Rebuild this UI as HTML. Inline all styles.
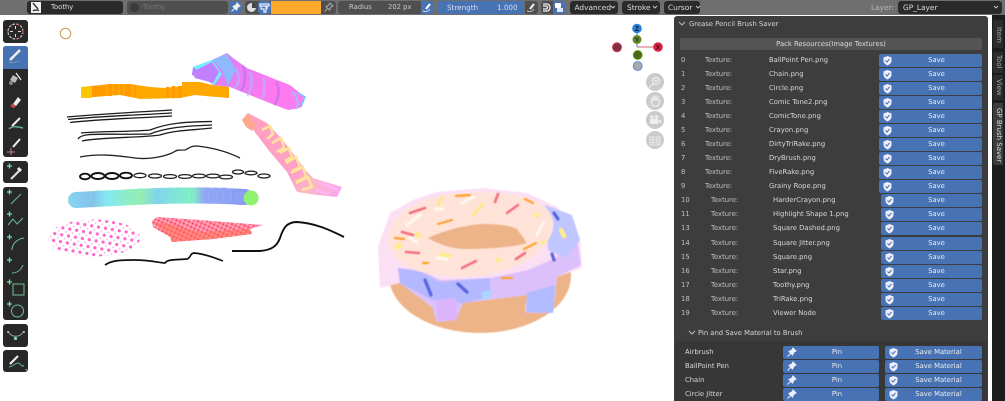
<!DOCTYPE html>
<html><head><meta charset="utf-8"><style>
*{box-sizing:border-box}
html,body{margin:0;padding:0;width:1005px;height:401px;overflow:hidden;background:#fff;font-family:"DejaVu Sans","Liberation Sans",sans-serif;text-rendering:geometricPrecision}
div{position:absolute}
#ui{left:0;top:0;width:1005px;height:401px;filter:blur(.35px)}
.t{font-size:6.8px;line-height:13px;height:13px;white-space:nowrap;color:#dadada}
.d{color:#c2c2c2}
.b{background:#4772b3;border-radius:2px;height:13px;color:#eee;font-size:6.8px;line-height:13px;text-align:center;text-indent:12px}
.b svg{position:absolute;left:3px;top:1px}
.s{left:879px;width:103px}.s2{left:881px;width:101px;text-indent:10px}.p{left:783px;width:96px}.m{left:885px;width:97px;text-indent:10px}
.f{height:13px;border-radius:3px;top:1px;font-size:7.4px;line-height:13px;color:#ddd;white-space:nowrap}
.k{background:#2a2a2a}.g{background:#4f4f4f}
.tb{background:#282828;left:3px;width:25px;border-radius:3px}
.tab{left:993px;width:10px;background:#2c2c2c;border-radius:2px 0 0 2px}
.tab span{position:absolute;left:1px;top:3px;writing-mode:vertical-rl;font-size:7px;line-height:9px;color:#a8a8a8;white-space:nowrap}
</style></head><body>
<svg width="0" height="0" style="position:absolute"><defs>
<symbol id="sh" viewBox="0 0 11 11"><path d="M5.500 1 9.500 2.500V6C9.500 8 7.500 9.500 5.500 10.500 3.500 9.500 1.500 8 1.500 6V2.500Z" fill="#eef"/><path d="M3.500 5.500 5 7 7.500 4" stroke="#4772b3" fill="none"/></symbol>
<symbol id="pn" viewBox="0 0 12 11"><path d="M7 1 10 4 8 5 6.500 8 3 4.500 6 3ZM4.500 6.500 1.500 9.500" fill="#eef" stroke="#eef"/></symbol>
</defs></svg>
<div id="ui">
<svg width="1005" height="401" style="position:absolute;left:0;top:0">
<defs>
<pattern id="dots" width="7" height="7" patternUnits="userSpaceOnUse" patternTransform="rotate(10)"><rect width="7" height="7" fill="#fff"/><circle cx="3.500" cy="3.500" r="1.600" fill="#ff66cc"/><circle cx="0" cy="0" r=".9" fill="#ffb0e8"/><circle cx="7" cy="0" r=".9" fill="#ffb0e8"/><circle cx="0" cy="7" r=".9" fill="#ffb0e8"/><circle cx="7" cy="7" r=".9" fill="#ffb0e8"/></pattern>
<pattern id="red" width="4" height="4" patternUnits="userSpaceOnUse" patternTransform="rotate(25)"><rect width="4" height="4" fill="#ff8a9c"/><circle cx="1" cy="1" r=".9" fill="#ff3078"/><circle cx="3" cy="3" r=".7" fill="#ffd0d4"/></pattern>
<linearGradient id="ball" x1="68" x2="258" y1="0" y2="0" gradientUnits="userSpaceOnUse"><stop offset="0" stop-color="#86d6ee"/><stop offset=".13" stop-color="#84c0ee"/><stop offset=".2" stop-color="#84e8f4"/><stop offset=".38" stop-color="#96eeb0"/><stop offset=".47" stop-color="#80d4ee"/><stop offset=".66" stop-color="#80f0c4"/><stop offset=".72" stop-color="#8ea4f4"/><stop offset="1" stop-color="#8c9cf6"/></linearGradient>
<linearGradient id="pur" x1="195" y1="65" x2="305" y2="105" gradientUnits="userSpaceOnUse"><stop offset="0" stop-color="#b080ff"/><stop offset=".25" stop-color="#e080f8"/><stop offset=".7" stop-color="#ff78ee"/><stop offset="1" stop-color="#f880f0"/></linearGradient>
<linearGradient id="ribbon" x1="245" y1="115" x2="340" y2="195" gradientUnits="userSpaceOnUse"><stop offset="0" stop-color="#ffa0c0"/><stop offset=".6" stop-color="#ffa0c8"/><stop offset=".78" stop-color="#fcb8c8"/><stop offset="1" stop-color="#f8a4f0"/></linearGradient>
</defs>
<rect width="1005" height="401" fill="#fff"/>
<circle cx="65.500" cy="33.500" r="5.200" fill="none" stroke="#c8a060" stroke-width="1.100"/>
<g style="filter:blur(.3px)">
<path d="M81 87 92 86 110 84 130 84 150 87 165 88 182 86 182 82 200 82 212 85 229 87 229 98 205 96 195 95 180 98 140 99 120 95 105 96 81 98Z" fill="#ffa800"/>
<path d="M81 87H92V98H81Z" fill="#ffc400"/><path d="M92 86 106 85V96L92 97ZM108 84h4v12h-4zM114 84h4v11h-4zM120 84h3v11h-3zM125 84h6v12h-6zM134 85h2v12h-2zM166 87h3v11h-3zM172 86h3v12h-3zM178 86h4v12h-4z" fill="#ff9a00"/>
<path d="M192 75 193 67 212 60 227 53 233 58 247 68 277 80 290 85 305 97 300 108 288 110 267 102 230 87 213 85 207 80Z" fill="url(#pur)"/>
<path d="M193 67 212 60 222 74 214 85 207 80 199 72Z" fill="#70f0ff"/>
<path d="M212 60 227 54 236 70 228 86 222 70Z" fill="#90b8fc"/>
<path d="M192 72 212 62 219 72 213 83 195 78Z" fill="#c080ff"/>
<g fill="none" stroke-width="2.500" opacity=".6"><path d="M236 68C240 76 240 84 234 88M250 72C254 82 250 92 247 96M263 78C266 86 264 96 261 100" stroke="#a8c0f8"/><path d="M243 66C247 76 245 84 241 91M276 82C281 90 278 100 274 105" stroke="#b070f0"/></g>
<path d="M292 92C298 96 299 104 296 109" fill="none" stroke="#a8b8f8" stroke-width="2"/>
<path d="M297 92 305 97 301 107" fill="none" stroke="#70c8ff" stroke-width="1.600"/>
<path d="M242 120 248 113 267 123 280 137 292 152 307 172 313 178 342 187 337 197 317 195 297 192 287 172 270 152 257 135 252 128Z" fill="url(#ribbon)"/>
<path d="M242 120 248 113 251 120 256 124 252 131 246 127Z" fill="#ffa88c"/>
<path d="M262 130 270 126 273 134 267 139M272 143 281 138 284 148 277 152M280 153 289 148 292 157 285 161M286 163 296 157 300 167 292 171M291 173 303 167 306 177 296 182M296 183 308 177 312 187 302 190" fill="none" stroke="#ffe49c" stroke-width="2.500"/>
<path d="M318 182 338 190M315 190 330 194" stroke="#ffb4f0" stroke-width="3" fill="none"/>
<g fill="none" stroke="#1c1c1c" stroke-width="1.300">
<path d="M67 117C100 114 140 112 172 110"/><path d="M68 119.500C100 116 140 115 172 113"/><path d="M70 122.500C100 119 140 118 172 116"/>
<path d="M81 133C100 131 130 132 150 130 170 122 190 122 212 121.500"/><path d="M78 139C82 132 100 135 150 134 170 126 195 126 212 125"/><path d="M82 141C100 137 140 138 160 135 175 130 195 130 212 128"/>
</g>
<path d="M80 157C100 153 120 156 135 158 150 160 165 156 172 153 178 150 175 150 185 150 190 148 190 146 197 146 215 148 230 153 240 158" fill="none" stroke="#222" stroke-width="1.300"/>
<g fill="none" stroke="#111" stroke-width="1.900">
<ellipse cx="85" cy="176.500" rx="5" ry="2.800"/><ellipse cx="98" cy="176" rx="6.500" ry="3"/><ellipse cx="112" cy="176" rx="6.500" ry="3"/><ellipse cx="126" cy="175.500" rx="6" ry="2.800"/>
</g>
<g fill="none" stroke="#222" stroke-width="1.300">
<ellipse cx="140" cy="175.500" rx="6" ry="2.200"/><ellipse cx="155" cy="176" rx="6.500" ry="2"/><ellipse cx="170" cy="176.500" rx="6.500" ry="1.900"/><ellipse cx="185" cy="176.500" rx="6.500" ry="1.900"/><ellipse cx="199" cy="176" rx="6.500" ry="1.900"/><ellipse cx="213" cy="176" rx="6.500" ry="1.900"/><ellipse cx="226" cy="177" rx="6.500" ry="1.900"/><ellipse cx="238" cy="172" rx="5.500" ry="2"/><ellipse cx="251" cy="173" rx="6" ry="1.800"/><ellipse cx="264" cy="176" rx="6" ry="2"/>
</g>
<path d="M76 200C120 198 180 193 245 197" fill="none" stroke="url(#ball)" stroke-width="16" stroke-linecap="round"/>
<g fill="none" stroke-width="1.200" opacity=".35"><circle cx="98" cy="198" r="7.500" stroke="#8fe8a8"/><circle cx="128" cy="197" r="7.500" stroke="#90f0b0"/><circle cx="134" cy="197" r="7.500" stroke="#90f0b0"/><circle cx="141" cy="196" r="7.500" stroke="#80e0d0"/><circle cx="170" cy="195" r="7.500" stroke="#90f0c0"/><circle cx="178" cy="195" r="7.500" stroke="#90f0c0"/><circle cx="199" cy="195" r="7.500" stroke="#a0b0f8"/><circle cx="207" cy="195" r="7.500" stroke="#a0b0f8"/><circle cx="216" cy="195" r="7.500" stroke="#a0c0f8"/><circle cx="224" cy="195" r="7.500" stroke="#a0c0f8"/><circle cx="240" cy="197" r="7.500" stroke="#7888f0"/></g>
<circle cx="251" cy="198" r="7.500" fill="#90f070"/>
<ellipse cx="94" cy="238" rx="46" ry="18.500" fill="url(#dots)"/>
<path d="M152 221 157 217 200 220 263 225 250 229 252 234 213 239 172 242 170 237 153 227Z" fill="url(#red)"/>
<path d="M153 222 170 224 200 232 250 229 252 234 213 239 172 242 170 237Z" fill="#ff7050" opacity=".5"/>
<path d="M232 251 260 251C272 250 277 246 280 238 283 229 286 222 297 222 315 223 330 230 344 237" fill="none" stroke="#111" stroke-width="1.900"/>
<path d="M105 265C112 260 122 260 135 260 150 260 160 263 165 263 168 259 175 260 187 259 191 258 190 253 194 253 205 254 215 258 223 261" fill="none" stroke="#111" stroke-width="1.700"/>
</g>
<g style="filter:blur(.6px)">
<ellipse cx="480" cy="276" rx="91" ry="57" fill="#edb48a"/>
<path d="M378 247 390 213 413 200 437 192 483 188 527 193 557 207 580 237 582 268 557 277 553 313 525 312 527 295 463 303 455 320 437 322 432 307 400 283 380 288Z" fill="#fbdff4"/>
<path d="M398 268 420 270 440 280 490 278 528 270 556 258 576 232 581 265 557 277 553 313 526 313 528 295 463 303 456 320 437 322 432 307 400 283Z" fill="#dcc0fc"/>
<path d="M398 268 420 272 440 282 490 278 490 297 463 303 432 300 400 283Z" fill="#b4b8ff"/>
<path d="M527 293 555 285 553 313 526 312Z" fill="#b0bcff"/>
<path d="M545 205 572 215 580 240 565 258 548 250Z" fill="#c0c6ff"/>
<path d="M437 300 456 298 457 320 437 321Z" fill="#dcb4fc"/>
<path d="M482 292 492 290 490 298 482 300Z" fill="#a8d8ff"/>
<path d="M388 240C388 222 403 207 430 198 450 192 490 190 515 195 545 201 556 213 553 230 546 250 530 262 500 272 470 279 440 278 415 270 400 264 388 252 388 240Z" fill="#ffe3d8"/>
<path d="M428 238C445 230 465 225 483 224 500 224 512 226 517 229L527 243C515 247 490 249 463 249 450 248 440 245 428 238Z" fill="#edb48a"/>
<g fill="none" stroke-linecap="round" stroke-width="2.600">
<path d="M410 213 425 208M507 213 518 205M495 202 498 194M406 252 419 253M462 268 476 261M516 259 525 253M402 232 413 235" stroke="#f47080"/>
<path d="M456 196 470 195M525 199 533 203M438 224 452 220M524 249 536 243M395 238 404 239M423 263 428 263M502 278 512 278" stroke="#ffa030" stroke-width="2.200"/>
<path d="M438 205 442 198M473 215 483 204" stroke="#ffe888" stroke-width="3"/>
<path d="M417 234 419 236M397 247 400 245M498 260 499 260M561 230 564 236M543 242 544 242M536 215 537 215M441 255 449 256" stroke="#ffec88" stroke-width="4.500"/>
<path d="M407 225 420 215M462 203 473 197M435 209 442 209M537 235 543 223M410 238 417 242M437 258 447 259" stroke="#fff6ee" stroke-width="3.500"/>
<path d="M425 280 431 295M458 284 467 292M554 213 558 219M552 254 554 260" stroke="#5a64e0" stroke-width="3.200"/>
</g>
</g>
<path d="M637 47H658" stroke="#d0607a" stroke-width="1"/><path d="M637 47V30" stroke="#4080d0" stroke-width="1"/>
<circle cx="637" cy="28.500" r="4.800" fill="#2a80e0"/><circle cx="637" cy="39.500" r="4.500" fill="#5f8a20"/>
<circle cx="658" cy="47" r="4.800" fill="#e02040"/><circle cx="617" cy="47.300" r="4.600" fill="#80303f" stroke="#e04060" stroke-width=".8"/>
<circle cx="637.700" cy="55" r="4.600" fill="#4a6618" stroke="#78c020" stroke-width=".8"/><circle cx="637.700" cy="66" r="4.500" fill="#a8a8b0" stroke="#5080d0" stroke-width=".8"/>
<text x="637" y="31" font-size="7" font-weight="bold" text-anchor="middle" fill="#111" font-family="Liberation Sans">Z</text>
<text x="637" y="42" font-size="7" font-weight="bold" text-anchor="middle" fill="#234" font-family="Liberation Sans">Y</text>
<text x="658" y="49.500" font-size="7" font-weight="bold" text-anchor="middle" fill="#411" font-family="Liberation Sans">X</text>
<circle cx="655" cy="82" r="9" fill="#cbcbcb"/><circle cx="655" cy="101" r="9" fill="#cbcbcb"/><circle cx="655" cy="120" r="9" fill="#cbcbcb"/><circle cx="655" cy="140" r="9" fill="#cbcbcb"/>
<g fill="none" stroke="#eee" stroke-width="1.200"><circle cx="656" cy="81" r="3.500"/><path d="M653 84 649 88M654.500 81H657.500M656 79.500V82.500"/>
<path d="M651 101 653 106H658L660 100"/><path d="M652 102V97M654 101V95.500M656 101V95.500M658 101V96.500" stroke-width="1.500"/>
<path d="M650 119H658V124H650ZM658 121 661 119.500V123.500L658 122" fill="#eee" stroke="none"/><circle cx="652" cy="117" r="1.700" fill="#eee" stroke="none"/><circle cx="656.500" cy="117" r="1.700" fill="#eee" stroke="none"/>
<path d="M650 137H660V145H650ZM653 137V145M657 137V145M650 140H660M650 142.500H660" stroke-width=".8"/></g>
</svg>

<div style="left:0;top:0;width:1005px;height:15px;background:#6f6f6f"></div>
<div class="f k" style="left:27px;width:96px;color:#e0e0e0;padding-left:24px;font-size:6.800px">Toothy</div>
<div style="left:31px;top:2px;width:10px;height:11px;background:#f2f2f2"></div>
<svg style="position:absolute;left:31px;top:2px" width="10" height="11"><path d="M2 1 7 7M2 9C4 7 6 9 8 8" stroke="#333" stroke-width="1.400" fill="none"/></svg>
<div class="f g" style="left:127px;width:101px;color:#777;padding-left:16px;font-size:6.800px">Toothy</div>
<div style="left:130px;top:3px;width:9px;height:9px;border-radius:50%;background:#3a3a3a"></div>
<div class="f" style="left:229px;width:12px;background:#4772b3"></div>
<svg style="position:absolute;left:230px;top:2px" width="11" height="11"><path d="M7 1 10 4 8 5 6.500 8 3 4.500 6 3ZM4.500 6.500 1.500 9.500" fill="#eee" stroke="#eee" stroke-width="1"/></svg>
<div class="f g" style="left:245px;width:91px"></div>
<div style="left:247px;top:3px;width:9px;height:9px;border-radius:50%;background:#ddd"></div>
<div style="left:251.500px;top:3px;width:4.500px;height:4.500px;background:#444;border-radius:0 4px 0 0"></div>
<div class="f" style="left:258px;width:13px;background:#4772b3"></div>
<svg style="position:absolute;left:259px;top:3px" width="11" height="10"><path d="M1 1H10V3H1ZM2 3V6H5V9H7V3M8 3V6" fill="none" stroke="#e8f0ff" stroke-width="1.200"/></svg>
<div class="f" style="left:271px;width:50px;background:#ffa92c;border-radius:0"></div>
<svg style="position:absolute;left:323px;top:2px" width="11" height="11"><path d="M7 1 10 4 8 5 6.500 8 3 4.500 6 3ZM4.500 6.500 1.500 9.500" fill="none" stroke="#aaa" stroke-width="1"/></svg>
<div class="f g" style="left:338px;width:83px;color:#ccc;font-size:6.800px;padding-left:11px;border-radius:3px 0 0 3px">Radius<span style="position:absolute;left:50px">202 px</span></div>
<div class="f" style="left:421px;width:12px;background:#4772b3;border-radius:0 3px 3px 0"></div>
<svg style="position:absolute;left:422px;top:3px" width="10" height="10"><path d="M8 1 4 6" stroke="#fff" stroke-width="2.200"/><path d="M1 8C3 9 6 9 8 6" stroke="#d0d8e8" fill="none"/></svg>
<div class="f" style="left:437px;width:87px;background:#4772b3;color:#dde;font-size:7.200px;padding-left:10px;border-radius:3px 0 0 3px">Strength<span style="position:absolute;left:60px">1.000</span></div>
<div class="f g" style="left:525px;width:13px;border-radius:0 3px 3px 0"></div>
<svg style="position:absolute;left:526px;top:3px" width="11" height="10"><path d="M8 1 4 6" stroke="#eee" stroke-width="2.200"/><path d="M1 8C3 9 6 9 8 6" stroke="#bbb" fill="none"/></svg>
<div class="f g" style="left:541px;width:12px;border-radius:3px 0 0 3px"></div>
<svg style="position:absolute;left:542px;top:3px" width="10" height="10"><path d="M1 1H5C9 1 9 8 5 8H1M1 3H4C6 3 6 6 4 6H1" fill="none" stroke="#eee" stroke-width="1.300"/></svg>
<div class="f" style="left:553px;width:12px;background:#4772b3;border-radius:0 3px 3px 0"></div>
<div style="left:555px;top:3px;width:6px;height:5px;background:#fff;border-radius:1px"></div><div style="left:557px;top:8px;width:6px;height:4px;background:#dfe8ff"></div>
<div class="f k" style="left:570px;width:48px;padding-left:4.500px">Advanced</div>
<div class="f k" style="left:622px;width:38px;padding-left:5px">Stroke</div>
<div class="f k" style="left:664px;width:36px;padding-left:4px">Cursor</div>
<div class="f" style="left:871px;color:#b8b8b8">Layer:</div>
<div class="f k" style="left:898px;width:104px;padding-left:5px">GP_Layer</div>
<svg style="position:absolute;left:0;top:0" width="1005" height="15"><g fill="none" stroke="#ccc" stroke-width=".9"><path d="M611 6 613 8 615 6M653 6 655 8 657 6M696 6 698 8 700 6M994 6 996 8 998 6"/></g></svg>

<div class="tb" style="top:20px;height:23px"></div>
<div class="tb" style="top:46px;height:111px"></div>
<div style="left:3px;top:46px;width:25px;height:23px;background:#4772b3;border-radius:3px 3px 0 0"></div>
<div class="tb" style="top:161px;height:22px"></div>
<div class="tb" style="top:187px;height:133px"></div>
<div class="tb" style="top:324px;height:23px"></div>
<div class="tb" style="top:350px;height:22px"></div>
<svg style="position:absolute;left:0;top:0" width="32" height="380">
<circle cx="15.500" cy="31.500" r="7.500" fill="none" stroke="#ccc" stroke-width="1.200" stroke-dasharray="2.500 1.500"/><path d="M15.500 26V29M15.500 34V37M10 31.500H13M18 31.500H21" stroke="#ddd"/>
<circle cx="15.500" cy="31.500" r="7.500" fill="none" stroke="#d04040" stroke-width="1.200" stroke-dasharray="1.500 6"/>
<path d="M10 60 20 50" stroke="#eee" stroke-width="2.600"/><path d="M9 62C13 64 17 61 20 61" stroke="#8090a8" stroke-width="1" fill="none"/>
<path d="M13 75 18 78 15 83 10 80Z" fill="#bbb"/><path d="M16 73 19 77 21 80" stroke="#eee" stroke-width="1.200" fill="none"/><circle cx="11" cy="83" r="2" fill="#888"/>
<path d="M13 104 18 97 21 100 16 106Z" fill="#eee"/><path d="M11 105 15 107" stroke="#c04848" stroke-width="3"/>
<path d="M12 126 20 118" stroke="#eee" stroke-width="2"/><path d="M9 129C13 125 18 127 23 128" stroke="#60b090" stroke-width="1.500" fill="none"/>
<path d="M7 152H15M11 148V155" stroke="#c08a80" stroke-width="1"/><path d="M13 147 20 139" stroke="#eee" stroke-width="2"/>
<path d="M11 179 19 171" stroke="#ddd" stroke-width="2.200"/><path d="M18 168 21 171" stroke="#eee" stroke-width="3"/><path d="M7 166H12M9.500 163.500V168.500" stroke="#70e0a8" stroke-width="1.300"/>
<g stroke="#70c090" stroke-width="1" fill="none">
<path d="M11 204 21 194"/><path d="M8 225 13 219 17 224 23 218"/><path d="M12 250C12 243 18 239 24 238"/><path d="M12 273C17 273 21 270 23 265"/><rect x="13" y="284" width="11" height="11"/><circle cx="17.500" cy="311" r="6"/>
</g>
<g stroke="#70e0a8" stroke-width="1.300"><path d="M7 192H12M9.500 189.500V194.500M7 214H12M9.500 211.500V216.500M7 237H12M9.500 234.500V239.500M7 260H12M9.500 257.500V262.500M7 282H12M9.500 279.500V284.500M7 304H12M9.500 301.500V306.500"/></g>
<path d="M8 331C11 338 20 338 24 331" stroke="#999" fill="none"/><circle cx="15.500" cy="338.500" r="1.600" fill="#70e0a8"/><circle cx="8" cy="332" r=".9" fill="#ddd"/><circle cx="24" cy="332" r=".9" fill="#ddd"/>
<path d="M10 364 18 356" stroke="#eee" stroke-width="2.200"/><path d="M9 367C14 366 17 361 20 364 22 366 23 367 24 365" stroke="#60b090" fill="none"/><path d="M25 369 27 369 27 371Z" fill="#999"/>
</svg>

<div style="left:674px;top:16px;width:314px;height:385px;background:#3d3d3d;border-radius:3px 3px 0 0"></div>
<div style="left:992px;top:15px;width:13px;height:386px;background:#1c1c1c"></div>
<div class="tab" style="top:20px;height:28px"><span style="top:7px">Item</span></div>
<div class="tab" style="top:52px;height:21px"><span>Tool</span></div>
<div class="tab" style="top:75px;height:25px"><span style="top:4px">View</span></div>
<div class="tab" style="top:103px;height:62px;background:#3d3d3d"><span style="color:#ddd;top:5px">GP Brush Saver</span></div>
<svg style="position:absolute;left:678px;top:20px" width="10" height="8"><path d="M1 2 4 5 7 2" fill="none" stroke="#bbb"/></svg>
<div class="t" style="left:689px;top:18px;color:#d8d8d8">Grease Pencil Brush Saver</div>
<div style="left:680px;top:38px;width:302px;height:12px;background:#545454;border-radius:2px;color:#ddd;font-size:6.800px;line-height:12px;text-align:center">Pack Resources(Image Textures)</div>

<div class="t d" style="left:681px;top:54px">0</div><div class="t d" style="left:705px;top:54px">Texture:</div><div class="t" style="left:769px;top:54px">BallPoint Pen.png</div><div class="b s" style="top:54px">Save<svg width="11" height="11"><use href="#sh"/></svg></div>
<div class="t d" style="left:681px;top:68px">1</div><div class="t d" style="left:705px;top:68px">Texture:</div><div class="t" style="left:769px;top:68px">Chain.png</div><div class="b s" style="top:68px">Save<svg width="11" height="11"><use href="#sh"/></svg></div>
<div class="t d" style="left:681px;top:82px">2</div><div class="t d" style="left:705px;top:82px">Texture:</div><div class="t" style="left:769px;top:82px">Circle.png</div><div class="b s" style="top:82px">Save<svg width="11" height="11"><use href="#sh"/></svg></div>
<div class="t d" style="left:681px;top:96px">3</div><div class="t d" style="left:705px;top:96px">Texture:</div><div class="t" style="left:769px;top:96px">Comic Tone2.png</div><div class="b s" style="top:96px">Save<svg width="11" height="11"><use href="#sh"/></svg></div>
<div class="t d" style="left:681px;top:110px">4</div><div class="t d" style="left:705px;top:110px">Texture:</div><div class="t" style="left:769px;top:110px">ComicTone.png</div><div class="b s" style="top:110px">Save<svg width="11" height="11"><use href="#sh"/></svg></div>
<div class="t d" style="left:681px;top:124px">5</div><div class="t d" style="left:705px;top:124px">Texture:</div><div class="t" style="left:769px;top:124px">Crayon.png</div><div class="b s" style="top:124px">Save<svg width="11" height="11"><use href="#sh"/></svg></div>
<div class="t d" style="left:681px;top:138px">6</div><div class="t d" style="left:705px;top:138px">Texture:</div><div class="t" style="left:769px;top:138px">DirtyTriRake.png</div><div class="b s" style="top:138px">Save<svg width="11" height="11"><use href="#sh"/></svg></div>
<div class="t d" style="left:681px;top:152px">7</div><div class="t d" style="left:705px;top:152px">Texture:</div><div class="t" style="left:769px;top:152px">DryBrush.png</div><div class="b s" style="top:152px">Save<svg width="11" height="11"><use href="#sh"/></svg></div>
<div class="t d" style="left:681px;top:166px">8</div><div class="t d" style="left:705px;top:166px">Texture:</div><div class="t" style="left:769px;top:166px">FiveRake.png</div><div class="b s" style="top:166px">Save<svg width="11" height="11"><use href="#sh"/></svg></div>
<div class="t d" style="left:681px;top:180px">9</div><div class="t d" style="left:705px;top:180px">Texture:</div><div class="t" style="left:769px;top:180px">Grainy Rope.png</div><div class="b s" style="top:180px">Save<svg width="11" height="11"><use href="#sh"/></svg></div>

<div class="t d" style="left:681px;top:194px">10</div><div class="t d" style="left:711px;top:194px">Texture:</div><div class="t" style="left:773px;top:194px">HarderCrayon.png</div><div class="b s2" style="top:194px">Save<svg width="11" height="11"><use href="#sh"/></svg></div>
<div class="t d" style="left:681px;top:208px">11</div><div class="t d" style="left:711px;top:208px">Texture:</div><div class="t" style="left:773px;top:208px">Highlight Shape 1.png</div><div class="b s2" style="top:208px">Save<svg width="11" height="11"><use href="#sh"/></svg></div>
<div class="t d" style="left:681px;top:222px">13</div><div class="t d" style="left:711px;top:222px">Texture:</div><div class="t" style="left:773px;top:222px">Square Dashed.png</div><div class="b s2" style="top:222px">Save<svg width="11" height="11"><use href="#sh"/></svg></div>
<div class="t d" style="left:681px;top:236.500px">14</div><div class="t d" style="left:711px;top:236.500px">Texture:</div><div class="t" style="left:773px;top:236.500px">Square Jitter.png</div><div class="b s2" style="top:236.500px">Save<svg width="11" height="11"><use href="#sh"/></svg></div>
<div class="t d" style="left:681px;top:250.500px">15</div><div class="t d" style="left:711px;top:250.500px">Texture:</div><div class="t" style="left:773px;top:250.500px">Square.png</div><div class="b s2" style="top:250.500px">Save<svg width="11" height="11"><use href="#sh"/></svg></div>
<div class="t d" style="left:681px;top:264.500px">16</div><div class="t d" style="left:711px;top:264.500px">Texture:</div><div class="t" style="left:773px;top:264.500px">Star.png</div><div class="b s2" style="top:264.500px">Save<svg width="11" height="11"><use href="#sh"/></svg></div>
<div class="t d" style="left:681px;top:278.500px">17</div><div class="t d" style="left:711px;top:278.500px">Texture:</div><div class="t" style="left:773px;top:278.500px">Toothy.png</div><div class="b s2" style="top:278.500px">Save<svg width="11" height="11"><use href="#sh"/></svg></div>
<div class="t d" style="left:681px;top:292.500px">18</div><div class="t d" style="left:711px;top:292.500px">Texture:</div><div class="t" style="left:773px;top:292.500px">TriRake.png</div><div class="b s2" style="top:292.500px">Save<svg width="11" height="11"><use href="#sh"/></svg></div>
<div class="t d" style="left:681px;top:306.500px">19</div><div class="t d" style="left:711px;top:306.500px">Texture:</div><div class="t" style="left:773px;top:306.500px">Viewer Node</div><div class="b s2" style="top:306.500px">Save<svg width="11" height="11"><use href="#sh"/></svg></div>

<svg style="position:absolute;left:688px;top:329px" width="10" height="8"><path d="M1 2 4 5 7 2" fill="none" stroke="#bbb"/></svg>
<div class="t" style="left:698px;top:326.500px;color:#d8d8d8">Pin and Save Material to Brush</div>
<div style="left:675px;top:341px;width:312px;height:60px;background:#373737"></div>

<div class="t" style="left:685px;top:346px">Airbrush</div><div class="b p" style="top:346px">Pin<svg width="12" height="11"><use href="#pn"/></svg></div><div class="b m" style="top:346px">Save Material<svg width="11" height="11"><use href="#sh"/></svg></div>
<div class="t" style="left:685px;top:360px">BallPoint Pen</div><div class="b p" style="top:360px">Pin<svg width="12" height="11"><use href="#pn"/></svg></div><div class="b m" style="top:360px">Save Material<svg width="11" height="11"><use href="#sh"/></svg></div>
<div class="t" style="left:685px;top:374px">Chain</div><div class="b p" style="top:374px">Pin<svg width="12" height="11"><use href="#pn"/></svg></div><div class="b m" style="top:374px">Save Material<svg width="11" height="11"><use href="#sh"/></svg></div>
<div class="t" style="left:685px;top:388px">Circle Jitter</div><div class="b p" style="top:388px">Pin<svg width="12" height="11"><use href="#pn"/></svg></div><div class="b m" style="top:388px">Save Material<svg width="11" height="11"><use href="#sh"/></svg></div>
</div>
</body></html>
